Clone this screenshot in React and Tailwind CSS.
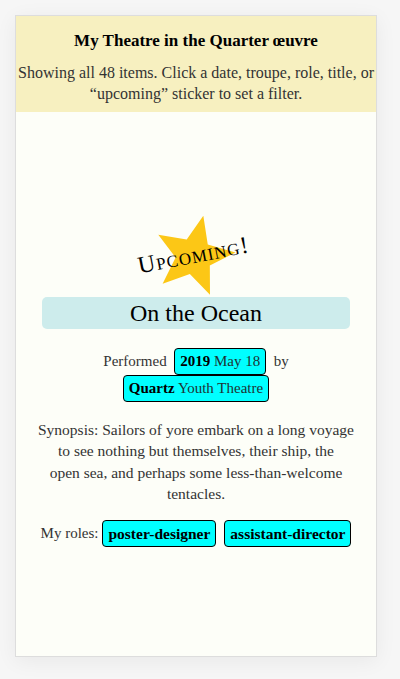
import React from 'react';

const serif = { fontFamily: '"Liberation Serif", "DejaVu Serif", serif' };

const Chip = ({ bold, rest }) => (
  <span className="inline-block rounded-[4px] border border-black bg-[#00ffff] px-[5px] leading-[25px] text-[#1f3333]">
    {bold && <b className="font-bold text-black">{bold}</b>}
    {bold && rest ? ' ' : ''}
    {rest}
  </span>
);

const Star = () => (
  <svg width="90" height="90" viewBox="-50 -50 100 100" className="block">
    <polygon
      transform="rotate(13)"
      fill="#fcc716"
      points="0,-46 12,-16 44,-14.2 19.5,6.3 27,38 0,20.5 -27,38 -19.5,6.3 -44,-14.2 -12,-16"
    />
  </svg>
);

const Role = ({ children }) => (
  <span className="shrink-0 whitespace-nowrap rounded-[4px] border border-black bg-[#00ffff] px-[5px] text-[15.5px] font-bold leading-[25px] text-black">
    {children}
  </span>
);

const App = () => {
  return (
    <div className="min-h-[679px] bg-[#f6f6f6] pt-[15px]" style={serif}>
      <div className="ml-[15px] w-[362px] border border-[#dddddd] bg-[#fdfef8] shadow-[0_4px_20px_rgba(0,0,0,0.06)]">
        {/* header */}
        <div className="bg-[#f7f0c0] pt-[12px] pb-[8px] text-center">
          <h1 className="text-[17px] font-bold leading-[26px] text-black">
            My Theatre in the Quarter œuvre
          </h1>
          <p className="mt-[8px] text-[16px] leading-[21px] text-[#333]">
            Showing all 48 items. Click a date, troupe, role, title, or “upcoming” sticker to set a filter.
          </p>
        </div>

        {/* item */}
        <div className="flex h-[544px] flex-col items-center justify-center px-[18px] pb-[7px] text-center text-[15px] text-[#333]">
          <div className="relative flex h-[82px] w-full justify-center">
            <div className="-ml-[4px] mt-[-4px]">
              <Star />
            </div>
            <span className="absolute left-[103px] top-[22px] -rotate-[11deg] text-[24px] tracking-[1px] text-black [font-variant:small-caps]">
              Upcoming!
            </span>
          </div>
          <h2 className="w-[308px] rounded-[5px] bg-[#cdecec] text-[24px] leading-[32px] text-black">
            On the Ocean
          </h2>
          <div className="mt-[19px] leading-[27px]">
            Performed&nbsp; <Chip bold="2019" rest="May 18" />&nbsp; by
            <br />
            <Chip bold="Quartz" rest="Youth Theatre" />
          </div>
          <p className="mt-[17px] text-[15.5px] leading-[21.5px]">
            Synopsis: Sailors of yore embark on a long voyage
            <br />
            to see nothing but themselves, their ship, the
            <br />
            open sea, and perhaps some less-than-welcome
            <br />
            tentacles.
          </p>
          <div className="mt-[15px] flex items-center justify-center gap-[8px] whitespace-nowrap">
            <span>My roles:</span>
            <span className="-ml-[4px] flex gap-[8px]">
              <Role>poster-designer</Role>
              <Role>assistant-director</Role>
            </span>
          </div>
        </div>
      </div>
    </div>
  );
};

export default App;
